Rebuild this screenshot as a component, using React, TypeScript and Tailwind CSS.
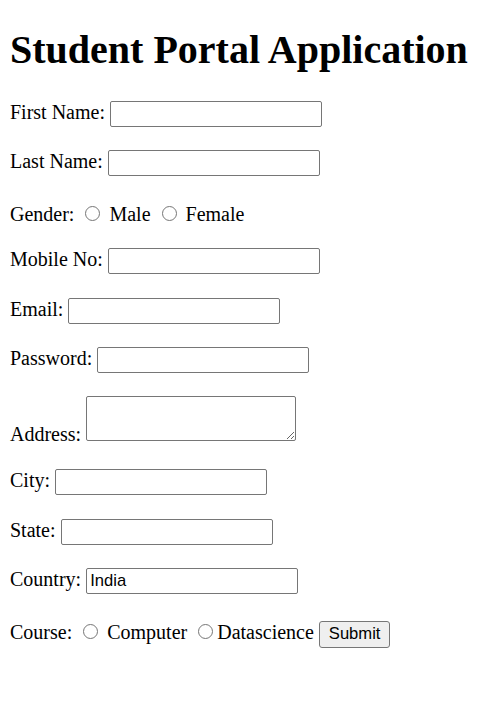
import React from 'react';

const inputCls =
  "inline-block w-[212px] h-[26px] px-[3px] py-[1px] border border-[#767676] rounded-[2px] bg-white font-['Liberation_Sans',Arial,sans-serif] text-[16.6px] text-black align-baseline";

const radioCls =
  "appearance-none inline-block w-[15px] h-[15px] ml-[6px] mr-[4px] mt-[4px] rounded-full border border-[#767676] bg-white align-baseline";

function Row({ label, value }: { label: string; value?: string }) {
  return (
    <p>
      {label}: <input type="text" defaultValue={value} className={inputCls} />
    </p>
  );
}

export default function App() {
  return (
    <div className="min-h-screen bg-white px-[10px] pt-[10px] font-['Liberation_Serif','Times_New_Roman',serif] text-[20px] leading-normal text-black">
      <h1 className="mt-[10px] mb-[17.3px] text-[40px] font-bold leading-normal">Student Portal Application</h1>
      <form className="flex flex-col gap-[19.2px]" onSubmit={(e) => e.preventDefault()}>
        <Row label="First Name" />
        <Row label="Last Name" />
        <p className="pt-[3px] -mb-[3.5px]">
          Gender: <input type="radio" name="gender" className={radioCls} /> Male{' '}
          <input type="radio" name="gender" className={radioCls} /> Female
        </p>
        <Row label="Mobile No" />
        <Row label="Email" />
        <p>
          Password: <input type="password" className={inputCls} />
        </p>
        <p className="pt-[4px] -mb-[2.7px]">
          Address:{' '}
          <textarea className="inline-block w-[210px] h-[45px] border border-[#767676] rounded-[2px] bg-white align-baseline font-['Liberation_Mono',monospace] text-[16px]" />
        </p>
        <Row label="City" />
        <Row label="State" />
        <Row label="Country" value="India" />
        <p className="pt-[4px]">
          Course: <input type="radio" name="course" className={radioCls} /> Computer{' '}
          <input type="radio" name="course" className={radioCls} />Datascience{' '}
          <button
            type="submit"
            className="inline-block h-[27px] px-[9px] border border-[#767676] rounded-[3px] bg-[#efefef] font-['Liberation_Sans',Arial,sans-serif] text-[16.6px] text-black align-baseline"
          >
            Submit
          </button>
        </p>
      </form>
    </div>
  );
}
